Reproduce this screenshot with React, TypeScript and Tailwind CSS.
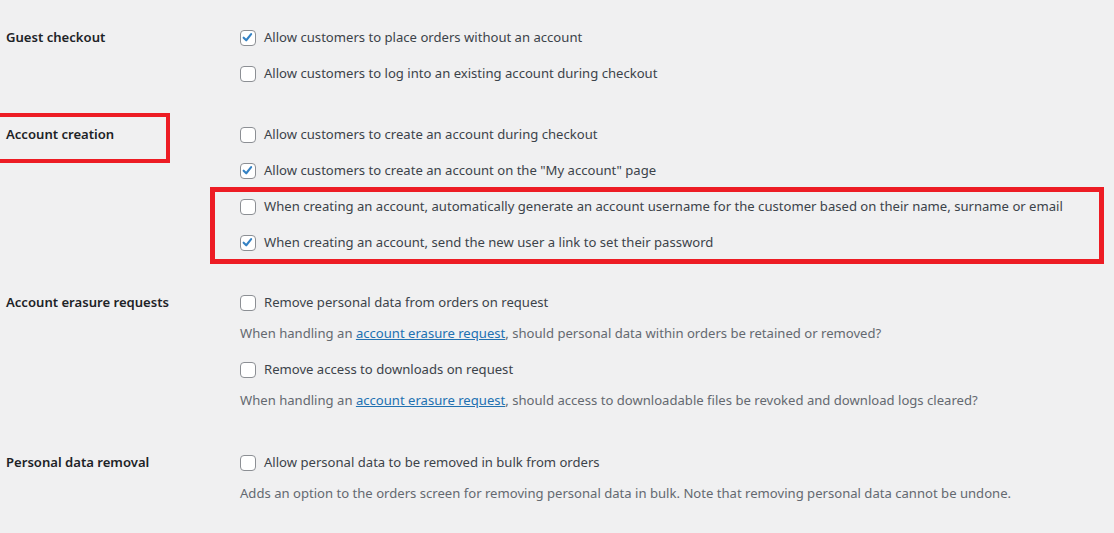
import React from "react";

type Opt = { label: string; checked?: boolean };

function Check({ checked }: { checked?: boolean }) {
  return (
    <span className="relative inline-flex h-4 w-4 shrink-0 items-center justify-center rounded-[4px] border border-[#8c8f94] bg-white">
      {checked && (
        <svg viewBox="0 0 16 16" className="absolute left-0 top-0 h-[14px] w-[14px]">
          <polyline points="3,7.6 6,10.6 11.6,3.6" fill="none" stroke="#3582c4" strokeWidth="2.4" strokeLinecap="round" strokeLinejoin="round" />
        </svg>
      )}
    </span>
  );
}

function Option({ label, checked }: Opt) {
  return (
    <div className="flex h-[36px] items-center gap-2 text-[#3c434a]">
      <Check checked={checked} />
      <span>{label}</span>
    </div>
  );
}

function Desc({ children }: { children: React.ReactNode }) {
  return <div className="h-[31px] leading-[25px] text-[#646970]">{children}</div>;
}

function Link() {
  return <a className="text-[#2271b1] underline">account erasure request</a>;
}

function Section({ title, children, className }: { title: string; children: React.ReactNode; className?: string }) {
  return (
    <div className={"flex " + (className ?? "")}>
      <div className="flex h-[36px] w-[240px] shrink-0 items-center pl-[6px] font-semibold text-[#1d2327]">{title}</div>
      <div className="flex flex-col">{children}</div>
    </div>
  );
}

export default function App() {
  return (
    <div
      className="relative flex h-[533px] w-[1114px] flex-col overflow-hidden bg-[#f0f0f1] pt-[20px] text-[13.1px]"
      style={{ fontFamily: '"Segoe UI", "Noto Sans", sans-serif' }}
    >
      <Section title="Guest checkout">
        <Option label="Allow customers to place orders without an account" checked />
        <Option label="Allow customers to log into an existing account during checkout" />
      </Section>
      <Section title="Account creation" className="mt-[25px]">
        <Option label="Allow customers to create an account during checkout" />
        <Option label={'Allow customers to create an account on the "My account" page'} checked />
        <Option label="When creating an account, automatically generate an account username for the customer based on their name, surname or email" />
        <Option label="When creating an account, send the new user a link to set their password" checked />
      </Section>
      <Section title="Account erasure requests" className="mt-[24px]">
        <Option label="Remove personal data from orders on request" />
        <Desc>
          When handling an <Link />, should personal data within orders be retained or removed?
        </Desc>
        <Option label="Remove access to downloads on request" />
        <Desc>
          When handling an <Link />, should access to downloadable files be revoked and download logs cleared?
        </Desc>
      </Section>
      <Section title="Personal data removal" className="mt-[26px]">
        <Option label="Allow personal data to be removed in bulk from orders" />
        <Desc>
          Adds an option to the orders screen for removing personal data in bulk. Note that removing personal data cannot be undone.
        </Desc>
      </Section>

      {/* annotation boxes */}
      <div className="absolute left-[-10px] top-[113px] h-[50px] w-[180px] border-4 border-[#ed1c24]" />
      <div className="absolute left-[210px] top-[187px] h-[77px] w-[894px] border-[5px] border-[#ed1c24]" />
    </div>
  );
}
